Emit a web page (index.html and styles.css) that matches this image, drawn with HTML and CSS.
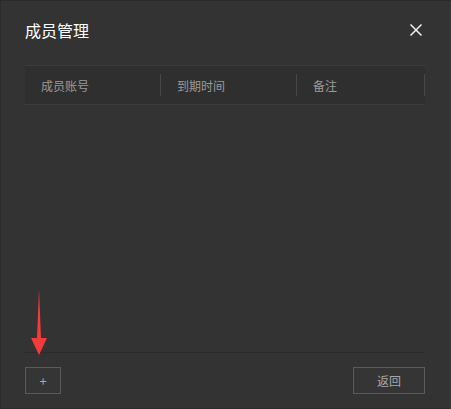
FILE: index.html
```html
<!DOCTYPE html>
<html>

<head>
	<title>成员管理</title>
	<link rel="stylesheet" href="styles.css">
</head>

<body>
	<section class="dialog">
		<div class="dialog-head">
			<p class="title">成员管理</p>
			<svg class="close" width="12" height="12" viewBox="0 0 12 12">
				<path d="M0.5 0.5 L11.5 11.5 M11.5 0.5 L0.5 11.5" stroke="#f2f2f2" stroke-width="1.5" fill="none" />
			</svg>
		</div>
		<div class="table-head">
			<div class="cell"><span>成员账号</span><i class="divider"></i></div>
			<div class="cell"><span>到期时间</span><i class="divider"></i></div>
			<div class="cell"><span>备注</span><i class="divider"></i></div>
		</div>
		<div class="table-body"></div>
		<div class="dialog-foot">
			<button class="btn add">+</button>
			<button class="btn back">返回</button>
		</div>
		<svg class="arrow" width="20" height="70" viewBox="29 288 20 70">
			<polygon points="39,289 41,338 47,338 39,355 31,338 37,338" fill="#f63a3a" />
		</svg>
	</section>
</body>

</html>
```

FILE: styles.css
```css
body,
* {
	margin: 0;
	padding: 0;
	box-sizing: border-box;
}

body {
	background: #333333;
	font-family: "Noto Sans CJK SC", "Noto Sans", sans-serif;
}

.dialog {
	position: relative;
	width: 451px;
	height: 409px;
	display: flex;
	flex-direction: column;
	padding: 0 25px 0 24px;
	background: #333333;
	border: 1px solid #2b2b2b;
	border-right-color: #3c3c3c;
}

.dialog-head {
	height: 64px;
	display: flex;
	justify-content: space-between;
	align-items: flex-start;
	padding-top: 17px;
}

.title {
	font-size: 16px;
	line-height: 24px;
	color: #ffffff;
}

.close {
	margin: 6px 3px 0 0;
}

.table-head {
	height: 40px;
	display: grid;
	grid-template-columns: 136px 136px 1fr;
	background: #2f2f2f;
	border-top: 1px solid #3d3d3d;
	border-bottom: 1px solid #3d3d3d;
}

.cell {
	display: flex;
	justify-content: space-between;
	align-items: center;
	font-size: 12px;
	color: #9a9a9a;
}

.cell span {
	padding-left: 16px;
}

.divider {
	width: 1px;
	height: 22px;
	background: #474747;
}

.table-body {
	flex: 1;
}

.dialog-foot {
	display: flex;
	justify-content: space-between;
	padding: 14px 0;
	border-top: 1px solid #2b2b2b;
}

.btn {
	height: 27px;
	background: #353535;
	border: 1px solid #5a5a5a;
	color: #a8a8a8;
	font-family: inherit;
	font-size: 12px;
}

.btn.add {
	width: 36px;
	font-size: 13px;
}

.btn.back {
	width: 72px;
}

.arrow {
	position: absolute;
	left: 28px;
	top: 287px;
}
```
